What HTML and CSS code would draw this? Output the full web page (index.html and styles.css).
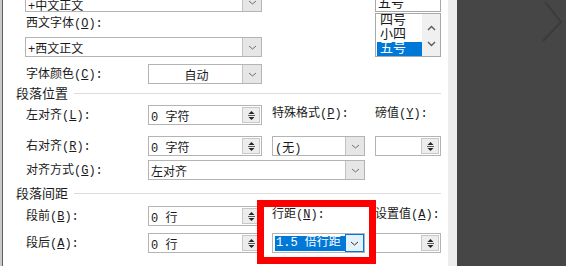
FILE: index.html
```html
<!DOCTYPE html>
<html lang="zh-CN">
<head>
    <meta charset="UTF-8">
    <title>段落设置</title>
    <link rel="stylesheet" href="styles.css">
</head>
<body>
    <div class="screen">
        <div class="edge"></div>
        <div class="dialog">
            <div class="font-block">
                <div class="font-fields">
                    <div class="combo cut">
                        <span class="combo-text">+中文正文</span>
                        <span class="drop"><svg width="9" height="5" viewBox="0 0 9 5"><polyline points="1,1 4.5,4 8,1"/></svg></span>
                    </div>
                    <div class="stack-label">西文字体(<u>O</u>):</div>
                    <div class="combo">
                        <span class="combo-text">+西文正文</span>
                        <span class="drop"><svg width="9" height="5" viewBox="0 0 9 5"><polyline points="1,1 4.5,4 8,1"/></svg></span>
                    </div>
                    <div class="color-row">
                        <span class="color-label">字体颜色(<u>C</u>):</span>
                        <div class="combo col1">
                            <span class="combo-text center">自动</span>
                            <span class="drop"><svg width="9" height="5" viewBox="0 0 9 5"><polyline points="1,1 4.5,4 8,1"/></svg></span>
                        </div>
                    </div>
                </div>
                <div class="size-field">
                    <div class="size-edit">五号</div>
                    <div class="size-list">
                        <ul>
                            <li>四号</li>
                            <li>小四</li>
                            <li class="selected">五号</li>
                        </ul>
                        <div class="list-scroll">
                            <svg width="9" height="6" viewBox="0 0 9 6"><polyline points="1,5 4.5,1.5 8,5"/></svg>
                            <svg width="9" height="6" viewBox="0 0 9 6"><polyline points="1,1 4.5,4.5 8,1"/></svg>
                        </div>
                    </div>
                </div>
            </div>

            <div class="section first"><span>段落位置</span><div class="rule"></div></div>

            <div class="field-row r1">
                <span class="field-label">左对齐(<u>L</u>):</span>
                <div class="spin col1">
                    <span class="spin-text">0 字符</span>
                    <span class="spin-btn"><svg width="7" height="11" viewBox="0 0 7 11"><polygon points="0.5,4 3.5,1 6.5,4"/><line x1="0" y1="5.5" x2="7" y2="5.5"/><polygon points="0.5,7 3.5,10 6.5,7"/></svg></span>
                </div>
                <span class="col2 small-label">特殊格式(<u>P</u>):</span>
                <span class="col3 small-label">磅值(<u>Y</u>):</span>
            </div>

            <div class="field-row r2">
                <span class="field-label">右对齐(<u>R</u>):</span>
                <div class="spin col1">
                    <span class="spin-text">0 字符</span>
                    <span class="spin-btn"><svg width="7" height="11" viewBox="0 0 7 11"><polygon points="0.5,4 3.5,1 6.5,4"/><line x1="0" y1="5.5" x2="7" y2="5.5"/><polygon points="0.5,7 3.5,10 6.5,7"/></svg></span>
                </div>
                <div class="combo col2">
                    <span class="combo-text">(无)</span>
                    <span class="drop"><svg width="9" height="5" viewBox="0 0 9 5"><polyline points="1,1 4.5,4 8,1"/></svg></span>
                </div>
                <div class="spin col3">
                    <span class="spin-text"></span>
                    <span class="spin-btn"><svg width="7" height="11" viewBox="0 0 7 11"><polygon points="0.5,4 3.5,1 6.5,4"/><line x1="0" y1="5.5" x2="7" y2="5.5"/><polygon points="0.5,7 3.5,10 6.5,7"/></svg></span>
                </div>
            </div>

            <div class="field-row r3">
                <span class="field-label">对齐方式(<u>G</u>):</span>
                <div class="combo col-span">
                    <span class="combo-text">左对齐</span>
                    <span class="drop"><svg width="9" height="5" viewBox="0 0 9 5"><polyline points="1,1 4.5,4 8,1"/></svg></span>
                </div>
            </div>

            <div class="section second"><span>段落间距</span><div class="rule"></div></div>

            <div class="field-row r4">
                <span class="field-label">段前(<u>B</u>):</span>
                <div class="spin col1">
                    <span class="spin-text">0 行</span>
                    <span class="spin-btn"><svg width="7" height="11" viewBox="0 0 7 11"><polygon points="0.5,4 3.5,1 6.5,4"/><line x1="0" y1="5.5" x2="7" y2="5.5"/><polygon points="0.5,7 3.5,10 6.5,7"/></svg></span>
                </div>
                <span class="col2 small-label">行距(<u>N</u>):</span>
                <span class="col3 small-label">设置值(<u>A</u>):</span>
            </div>

            <div class="field-row r5">
                <span class="field-label">段后(<u>A</u>):</span>
                <div class="spin col1">
                    <span class="spin-text">0 行</span>
                    <span class="spin-btn"><svg width="7" height="11" viewBox="0 0 7 11"><polygon points="0.5,4 3.5,1 6.5,4"/><line x1="0" y1="5.5" x2="7" y2="5.5"/><polygon points="0.5,7 3.5,10 6.5,7"/></svg></span>
                </div>
                <div class="combo col2 focused">
                    <span class="combo-text"><span class="sel">1.5 倍行距</span></span>
                    <span class="drop"><svg width="9" height="5" viewBox="0 0 9 5"><polyline points="1,1 4.5,4 8,1"/></svg></span>
                </div>
                <div class="spin col3">
                    <span class="spin-text"></span>
                    <span class="spin-btn"><svg width="7" height="11" viewBox="0 0 7 11"><polygon points="0.5,4 3.5,1 6.5,4"/><line x1="0" y1="5.5" x2="7" y2="5.5"/><polygon points="0.5,7 3.5,10 6.5,7"/></svg></span>
                </div>
            </div>
        </div>
        <div class="gutter"></div>
        <div class="viewer">
            <svg class="next" width="22" height="44" viewBox="0 0 22 44"><polyline points="4,2 20,22 2,41"/></svg>
        </div>

        <!-- red annotation box over the line spacing field -->
        <div class="mark"></div>
    </div>
</body>
</html>
```

FILE: styles.css
```css
* {
    box-sizing: border-box;
}

body {
    margin: 0;
    font-family: "Liberation Mono", "Noto Sans CJK SC", monospace;
    font-size: 12px;
    color: #1a1a1a;
    background-color: #464646;
}

.screen {
    position: relative;
    display: flex;
    height: 266px;
    overflow: hidden;
}

.edge {
    width: 2px;
    background-color: #c9c9c9;
}

.dialog {
    width: 446px;
    background-color: #fff;
    border-left: 1px solid #5f5f5f;
    padding: 0 7px 0 13px;
}

/* font part (top) */

.font-block {
    display: flex;
}

.font-fields {
    width: 237px;
    margin-left: 9px;
}

.combo {
    display: flex;
    height: 20px;
    border: 1px solid #b4b4b4;
    background-color: #fff;
}

.combo.cut {
    margin-top: -8px;
}

.combo.cut .combo-text {
    padding-top: 5px;
}

.combo-text,
.spin-text {
    flex: 1;
    display: flex;
    align-items: center;
    padding: 1px 0 0 2px;
    white-space: nowrap;
    overflow: hidden;
}

.combo-text.center {
    justify-content: center;
}

.drop {
    display: flex;
    align-items: center;
    justify-content: center;
    width: 19px;
    background-color: #e6e6e6;
    border-left: 1px solid #c2c2c2;
}

.drop svg polyline {
    fill: none;
    stroke: #6f6f6f;
    stroke-width: 1;
}

.stack-label {
    height: 20px;
    line-height: 20px;
    margin-top: 2px;
    margin-bottom: 3px;
    padding-left: 1px;
}

.color-row {
    display: flex;
    align-items: center;
    margin-top: 7px;
}

.color-label {
    width: 123px;
    padding-left: 1px;
    margin-bottom: 2px;
}

/* font size list */

.size-field {
    width: 67px;
    margin-left: 113px;
}

.size-edit {
    height: 20px;
    margin-top: -8px;
    padding: 3px 0 0 2px;
    font-size: 13px;
    line-height: 16px;
    border: 1px solid #a9a9a9;
}

.size-list {
    display: flex;
    height: 44px;
    margin-top: 1px;
    border: 1px solid #a9a9a9;
}

.size-list ul {
    width: 46px;
    margin: 0;
    padding: 0 0 0 1px;
    list-style: none;
    font-size: 13px;
}

.size-list li {
    height: 14px;
    line-height: 14px;
    padding-left: 3px;
    overflow: hidden;
}

.size-list li.selected {
    background-color: #0078d7;
    color: #fff;
}

.list-scroll {
    flex: 1;
    display: flex;
    flex-direction: column;
    align-items: center;
    justify-content: space-around;
    padding: 6px 0 4px;
    background-color: #f0f0f0;
}

.list-scroll polyline {
    fill: none;
    stroke: #5a5a5a;
    stroke-width: 1.4;
}

/* paragraph part */

.section {
    display: flex;
    align-items: center;
    gap: 6px;
    height: 16px;
    font-size: 13px;
}

.section span {
    margin-bottom: 2px;
}

.section.first {
    margin-top: 1px;
}

.section.second {
    margin-top: 5px;
}

.rule {
    flex: 1;
    height: 1px;
    background-color: #dcdcdc;
}

.field-row {
    display: flex;
    align-items: center;
    height: 20px;
}

.r1 { margin-top: 4px; }
.r2 { margin-top: 11px; }
.r3 { margin-top: 4px; }
.r4 { margin-top: 5px; }
.r5 { margin-top: 7px; }

.field-label {
    width: 132px;
    padding-left: 10px;
    margin-bottom: 2px;
}

.col1 {
    width: 114px;
}

.col2 {
    width: 93px;
    margin-left: 10px;
}

.col3 {
    width: 66px;
    margin-left: 10px;
}

.col-span {
    width: 217px;
}

.small-label {
    white-space: nowrap;
    margin-bottom: 7px;
}

.spin {
    display: flex;
    height: 20px;
    border: 1px solid #b4b4b4;
    background-color: #fff;
}

.spin-btn {
    display: flex;
    align-items: center;
    justify-content: center;
    width: 18px;
    margin: 1px;
    background-color: #ededed;
    border: 1px solid #c8c8c8;
}

.spin-btn polygon {
    fill: #262626;
}

.spin-btn line {
    stroke: #5a5a5a;
    stroke-width: 1;
}

.combo.focused .drop {
    background-color: #e5f1fb;
    border: 1px solid #0078d7;
}

.combo.focused .drop polyline {
    stroke: #333;
}

.sel {
    display: inline-block;
    line-height: 15px;
    padding: 0 4px 0 1px;
    background-color: #0078d7;
    color: #fff;
}

/* right side */

.gutter {
    width: 9px;
    background-color: #ededed;
}

.viewer {
    flex: 1;
    display: flex;
    justify-content: flex-end;
    padding-right: 3px;
    background-color: #464646;
}

.next polyline {
    fill: none;
    stroke: #3b3b3b;
    stroke-width: 2;
}

.mark {
    position: absolute;
    left: 257px;
    top: 200px;
    width: 119px;
    height: 64px;
    border: 7px solid #fe0000;
}
```
